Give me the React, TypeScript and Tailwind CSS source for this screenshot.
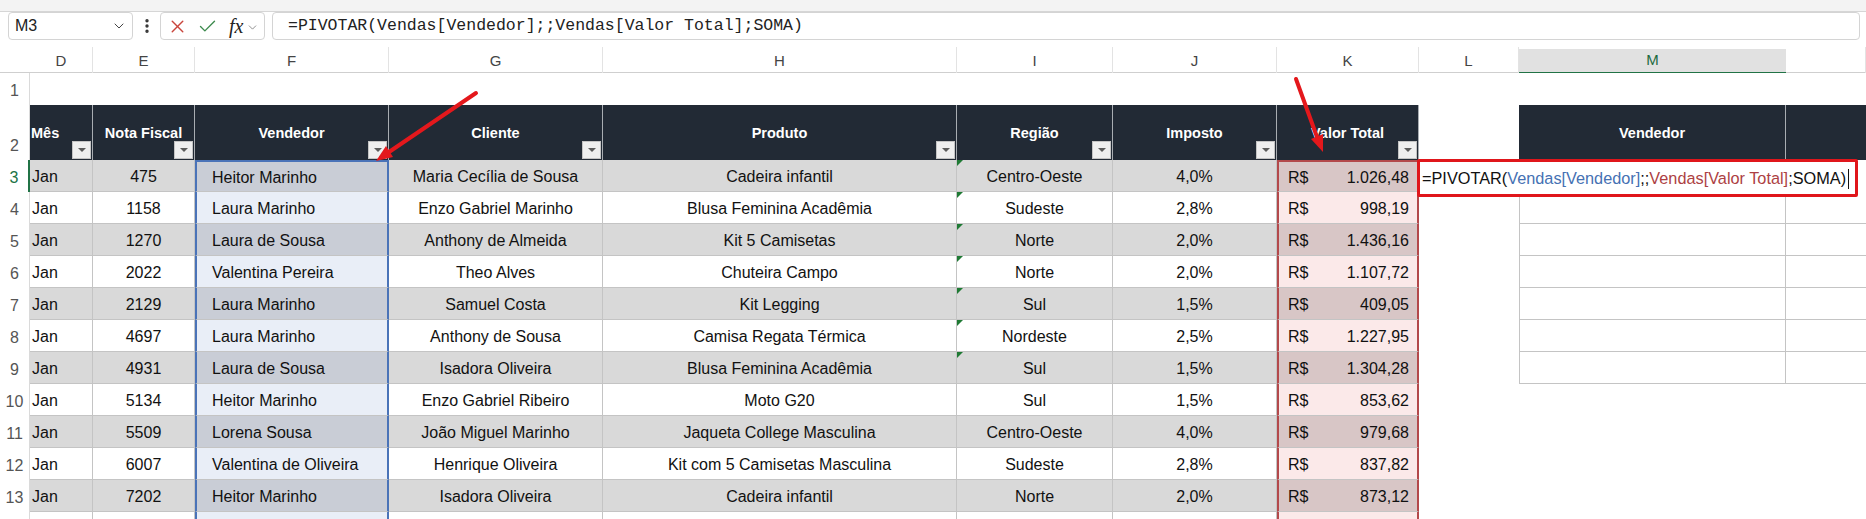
import { Check, ChevronDown, EllipsisVertical, X } from "lucide-react";

const GRID =
  "grid grid-cols-[30px_63px_102px_194px_214px_354px_156px_164px_142px_100px_267px_1fr]";

type Venda = {
  n: number;
  nf: string;
  vend: string;
  cli: string;
  prod: string;
  reg: string;
  imp: string;
  val: string;
};

const vendas: Venda[] = [
  { n: 3, nf: "475", vend: "Heitor Marinho", cli: "Maria Cecília de Sousa", prod: "Cadeira infantil", reg: "Centro-Oeste", imp: "4,0%", val: "1.026,48" },
  { n: 4, nf: "1158", vend: "Laura Marinho", cli: "Enzo Gabriel Marinho", prod: "Blusa Feminina Acadêmia", reg: "Sudeste", imp: "2,8%", val: "998,19" },
  { n: 5, nf: "1270", vend: "Laura de Sousa", cli: "Anthony de Almeida", prod: "Kit 5 Camisetas", reg: "Norte", imp: "2,0%", val: "1.436,16" },
  { n: 6, nf: "2022", vend: "Valentina Pereira", cli: "Theo Alves", prod: "Chuteira Campo", reg: "Norte", imp: "2,0%", val: "1.107,72" },
  { n: 7, nf: "2129", vend: "Laura Marinho", cli: "Samuel Costa", prod: "Kit Legging", reg: "Sul", imp: "1,5%", val: "409,05" },
  { n: 8, nf: "4697", vend: "Laura Marinho", cli: "Anthony de Sousa", prod: "Camisa Regata Térmica", reg: "Nordeste", imp: "2,5%", val: "1.227,95" },
  { n: 9, nf: "4931", vend: "Laura de Sousa", cli: "Isadora Oliveira", prod: "Blusa Feminina Acadêmia", reg: "Sul", imp: "1,5%", val: "1.304,28" },
  { n: 10, nf: "5134", vend: "Heitor Marinho", cli: "Enzo Gabriel Ribeiro", prod: "Moto G20", reg: "Sul", imp: "1,5%", val: "853,62" },
  { n: 11, nf: "5509", vend: "Lorena Sousa", cli: "João Miguel Marinho", prod: "Jaqueta College Masculina", reg: "Centro-Oeste", imp: "4,0%", val: "979,68" },
  { n: 12, nf: "6007", vend: "Valentina de Oliveira", cli: "Henrique Oliveira", prod: "Kit com 5 Camisetas Masculina", reg: "Sudeste", imp: "2,8%", val: "837,82" },
  { n: 13, nf: "7202", vend: "Heitor Marinho", cli: "Isadora Oliveira", prod: "Cadeira infantil", reg: "Norte", imp: "2,0%", val: "873,12" },
];

const letters = ["D", "E", "F", "G", "H", "I", "J", "K", "L", "M", ""];

function RowNum({ n, active }: { n?: number; active?: boolean }) {
  return (
    <div
      className={
        active
          ? "flex items-end justify-center pb-[2px] text-[16px] text-[#217346] border-r-2 border-r-[#217346] bg-white"
          : "flex items-end justify-center pb-[2px] text-[16px] text-[#555] border-r border-r-[#dadada] bg-white"
      }
    >
      {n}
    </div>
  );
}

function Head({ label, left, filter = true }: { label: string; left?: boolean; filter?: boolean }) {
  return (
    <div className="relative bg-[#222a35] border-r border-r-[#a9adb2] text-white font-bold text-[14.5px] overflow-hidden whitespace-nowrap">
      <div className={left ? "pt-[18px] leading-[20px] pl-[1px]" : "pt-[18px] leading-[20px] text-center"}>{label}</div>
      {filter && (
        <div className="absolute right-[1px] bottom-[1px] w-[19px] h-[18px] bg-[#efefef] border border-[#c4c4c4] flex items-center justify-center">
          <span className="w-0 h-0 border-x-[4px] border-x-transparent border-t-[4px] border-t-[#5c5c5c]" />
        </div>
      )}
    </div>
  );
}

function DataRow({ v, blank }: { v: Venda; blank?: boolean }) {
  const gray = v.n % 2 === 1;
  const first = v.n === 3;
  const bg = gray ? "bg-[#d9d9d9]" : "bg-white";
  const cell = "flex items-center pt-[2px] border-r border-b border-[#c4c4c4] whitespace-nowrap overflow-hidden";
  const fCell = gray ? "bg-[#c9cdd6]" : "bg-[#e9eef7]";
  const kCell = gray ? "bg-[#d8c6c6]" : "bg-[#fbe9e9]";
  return (
    <div className={`${GRID} h-[32px] text-[16px] text-[#111]`}>
      <RowNum n={blank ? undefined : v.n} active={first} />
      <div className={`${cell} ${bg} pl-[2px]`}>{blank ? "" : "Jan"}</div>
      <div className={`${cell} ${bg} justify-center`}>{blank ? "" : v.nf}</div>
      <div
        className={`${fCell} ${first ? "border-t-2 border-t-[#4a73b8]" : ""} flex items-center pt-[2px] pl-[15px] border-l-2 border-r-2 border-l-[#4a73b8] border-r-[#4a73b8] border-b border-b-[#c4c4c4] whitespace-nowrap overflow-hidden`}
      >
        {blank ? "" : v.vend}
      </div>
      <div className={`${cell} ${bg} justify-center`}>{blank ? "" : v.cli}</div>
      <div className={`${cell} ${bg} justify-center`}>{blank ? "" : v.prod}</div>
      <div className={`${cell} ${bg} justify-center relative`}>
        {v.n <= 9 && (
          <span className="absolute left-0 top-0 w-0 h-0 border-t-[6px] border-t-[#1f7a34] border-r-[6px] border-r-transparent" />
        )}
        {blank ? "" : v.reg}
      </div>
      <div className={`${cell} ${bg} justify-center`}>{blank ? "" : v.imp}</div>
      <div
        className={`${kCell} ${first ? "border-t-2 border-t-[#b3494b]" : ""} flex items-center justify-between pt-[2px] pl-[9px] pr-[8px] border-l-2 border-r-2 border-l-[#b3494b] border-r-[#b3494b] border-b border-b-[#c4c4c4] whitespace-nowrap`}
      >
        <span>{blank ? "" : "R$"}</span>
        <span>{blank ? "" : v.val}</span>
      </div>
      {first ? (
        <div className="col-span-3 relative bg-white">
          <div className="absolute left-[-2px] top-[-1px] w-[441px] h-[38px] rounded-[2px] border-[3px] border-[#e0161b] bg-white flex items-center pl-[2px] pt-[1px] whitespace-nowrap text-[16.3px] text-[#111]">
            <span>=PIVOTAR(</span>
            <span className="text-[#4571b3]">Vendas[Vendedor]</span>
            <span>;;</span>
            <span className="text-[#ad3f43]">Vendas[Valor Total]</span>
            <span>;SOMA)</span>
            <span className="ml-[2px] w-[1px] h-[20px] bg-[#111]" />
          </div>
        </div>
      ) : (
        <>
          <div className="bg-white" />
          {v.n <= 9 ? (
            <>
              <div className="bg-white border-l border-r border-b border-[#c4c4c4]" />
              <div className="bg-white border-b border-[#c4c4c4]" />
            </>
          ) : (
            <>
              <div className="bg-white" />
              <div className="bg-white" />
            </>
          )}
        </>
      )}
    </div>
  );
}

export default function App() {
  return (
    <div className="relative w-[1866px] h-[519px] overflow-hidden bg-white font-['Liberation_Sans',Arial,sans-serif]">
      {/* ribbon edge */}
      <div className="h-[12px] bg-[#f3f3f3] border-b border-[#d6d6d6]" />

      {/* formula bar */}
      <div className="h-[35px] flex items-start pl-[8px] pr-[6px] bg-white">
        <div className="w-[125px] h-[28px] rounded-[4px] border border-[#d4d4d4] flex items-center justify-between pl-[6px] pr-[5px] text-[16px] text-[#222]">
          <span>M3</span>
          <ChevronDown size={16} strokeWidth={1.5} className="text-[#444]" />
        </div>
        <div className="w-[27px] h-[28px] flex items-center justify-center text-[#333]">
          <EllipsisVertical size={18} strokeWidth={2.5} />
        </div>
        <div className="w-[105px] h-[28px] rounded-[4px] border border-[#d4d4d4] flex items-center pl-[6px] gap-[9px]">
          <X size={21} strokeWidth={1.6} className="text-[#c9453c]" />
          <Check size={21} strokeWidth={1.6} className="text-[#3c8a4d]" />
          <span className="font-['Liberation_Serif',serif] italic text-[20px] leading-none text-[#222] ml-[2px]">fx</span>
          <ChevronDown size={13} strokeWidth={1.5} className="text-[#777] -ml-[6px] mt-[3px]" />
        </div>
        <div className="flex-1 ml-[7px] h-[28px] rounded-[4px] border border-[#d4d4d4] flex items-center pl-[15px] font-['Liberation_Mono',monospace] text-[16.5px] text-[#222] whitespace-nowrap">
          =PIVOTAR(Vendas[Vendedor];;Vendas[Valor Total];SOMA)
        </div>
      </div>

      {/* column letters */}
      <div className={`${GRID} h-[26px] border-b border-[#cfcfcf] text-[15px] text-[#444]`}>
        <div />
        {letters.map((l, i) =>
          l === "M" ? (
            <div key={i} className="flex items-center justify-center bg-[#e1e1e1] text-[#1d6b40] border-b-2 border-b-[#217346] mt-[2px]">
              {l}
            </div>
          ) : (
            <div key={i} className="flex items-center justify-center pt-[2px] border-r border-r-[#e3e3e3]">
              {l}
            </div>
          )
        )}
      </div>

      {/* row 1 */}
      <div className={`${GRID} h-[32px]`}>
        <RowNum n={1} />
        <div className="col-span-11 bg-white" />
      </div>

      {/* row 2 - table headers */}
      <div className={`${GRID} h-[55px]`}>
        <RowNum n={2} />
        <Head label="Mês" left />
        <Head label="Nota Fiscal" />
        <Head label="Vendedor" />
        <Head label="Cliente" />
        <Head label="Produto" />
        <Head label="Região" />
        <Head label="Imposto" />
        <Head label="Valor Total" />
        <div className="bg-white" />
        <Head label="Vendedor" filter={false} />
        <div className="bg-[#222a35]" />
      </div>

      {vendas.map((v) => (
        <DataRow key={v.n} v={v} />
      ))}
      <DataRow v={{ n: 14, nf: "", vend: "", cli: "", prod: "", reg: "", imp: "", val: "" }} blank />

      {/* annotation arrows */}
      <svg className="absolute inset-0 pointer-events-none" width="1866" height="519" viewBox="0 0 1866 519">
        <line x1="476" y1="93" x2="389" y2="152" stroke="#e4181c" strokeWidth="4" strokeLinecap="round" />
        <polygon points="376,161 393,157 386,146" fill="#e4181c" />
        <line x1="1296" y1="79" x2="1317" y2="137" stroke="#e4181c" strokeWidth="4" strokeLinecap="round" />
        <polygon points="1323,152 1323,134 1311,139" fill="#e4181c" />
      </svg>
    </div>
  );
}
